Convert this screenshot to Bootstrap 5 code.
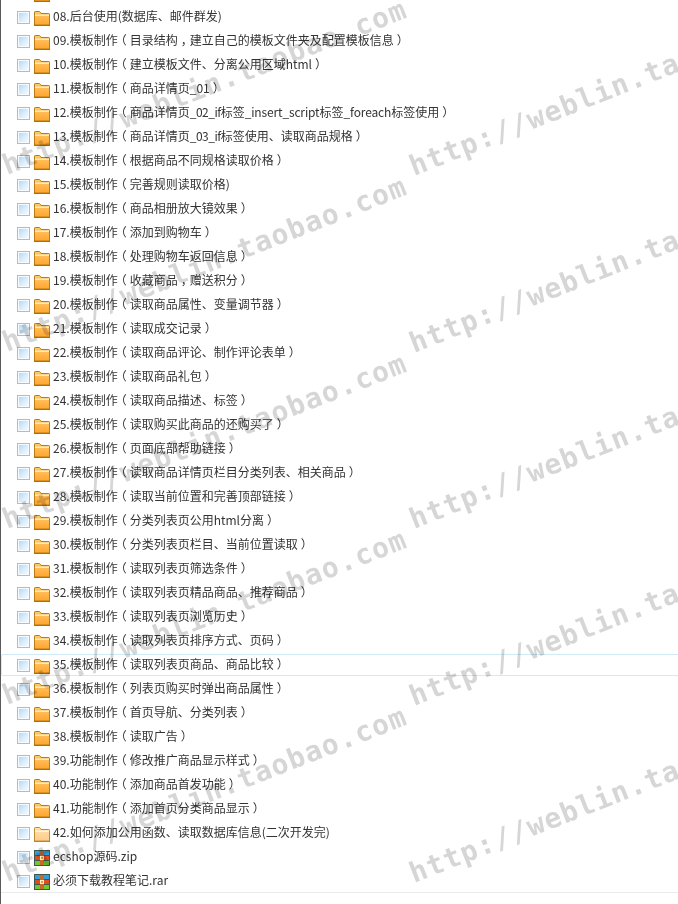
<!DOCTYPE html>
<html lang="zh">
<head>
<meta charset="utf-8">
<title>ecshop</title>
<link href="https://cdn.jsdelivr.net/npm/bootstrap@5.3.0/dist/css/bootstrap.min.css" rel="stylesheet">
<style>
html,body{height:904px;overflow:hidden;background:#fff}
.sheet{position:relative;height:904px;overflow:hidden;border-left:1px solid #5a5a5a;font:12px/22px "Noto Sans CJK SC","Noto Sans",sans-serif;color:#333}
.filelist{margin:-18px 0 0;padding:0;list-style:none;border-bottom:1px solid #e9eaec}
.filerow{height:22px;margin-bottom:2px;padding-left:15px;border:1px solid transparent;border-width:1px 0 1px 1px;white-space:nowrap}
.filerow:last-child{margin-bottom:0}
.filerow>span:last-child{padding-bottom:2px}
.filerow.hot{border-color:#d0eafa;border-radius:2px 0 0 2px}
.tick{width:13px;height:13px;margin-right:4px;flex:none;border:1px solid #8cc4fb;box-shadow:inset 0 0 0 1px #f6fbff;background:linear-gradient(135deg,#b2d9f8 10%,#dceefc 55%,#f6fbff)}
.ficon{width:16px;height:15px;margin:2px 3px 0 0;flex:none;display:block}
.ficon.tall{height:16px;margin-top:1px}
.po,.pc{font-style:normal}
.po{margin-left:-3px;margin-right:3px}
.pc{margin-left:3px;margin-right:-3px}
.snug{letter-spacing:-.5px}
.snugger{letter-spacing:-.15px}
.marks{position:absolute;left:-1px;top:0;width:678px;height:904px;pointer-events:none;mix-blend-mode:multiply}
.marks text{font:bold 28px "DejaVu Sans Mono",monospace;letter-spacing:1.14px;fill:#d6d6d6}
</style>
</head>
<body>
<svg width="0" height="0" class="d-block position-absolute">
<defs>
<linearGradient id="fb" x1="0" y1="0" x2="0" y2="1"><stop offset="0" stop-color="#ffcb6c"/><stop offset="1" stop-color="#ffa32c"/></linearGradient>
<linearGradient id="fp" x1="0" y1="0" x2="0" y2="1"><stop offset="0" stop-color="#ffe3ae"/><stop offset="1" stop-color="#ffc98a"/></linearGradient>
<symbol id="folder" viewBox="0 0 16 15">
<path d="M.5 14.5V1.2q0-.7.7-.7h4q.6 0 1 .6L7 2.5h7.8q.7 0 .7.7v11.3z" fill="url(#fb)" stroke="#bb7d14"/>
<path d="M1 3.5h14V5H1z" fill="#ffe9bd"/>
<path d="M0 13.6h16V15H0z" fill="#b06f00"/>
</symbol>
<symbol id="folderpale" viewBox="0 0 16 15">
<path d="M.5 14.5V1.2q0-.7.7-.7h4q.6 0 1 .6L7 2.5h7.8q.7 0 .7.7v11.3z" fill="url(#fp)" stroke="#c08a30"/>
<path d="M1 3.5h14V5H1z" fill="#fff3da"/>
<path d="M0 13.6h16V15H0z" fill="#bd8420"/>
</symbol>
<symbol id="archive" viewBox="0 0 16 16">
<path d="M0 0h16v16H0z" fill="#3a5a50"/>
<path d="M1 1h14v4H1z" fill="#2f9fe0"/>
<path d="M1 6h14v4H1z" fill="#e6491c"/>
<path d="M1 11h14v4H1z" fill="#72c92d"/>
<path d="M6 1h4v14H6z" fill="#c8692a"/>
<path d="M6 6h4v4H6z" fill="#fff2c8"/>
<path d="M7 7h2v2H7z" fill="#e7a020"/>
</symbol>
</defs>
</svg>
<div class="sheet">
<ul class="filelist">
<li class="filerow d-flex align-items-center"><span class="tick"></span><svg class="ficon"><use href="#folder"/></svg></li>
<li class="filerow d-flex align-items-center"><span class="tick"></span><svg class="ficon"><use href="#folder"/></svg><span>08.后台使用(数据库、邮件群发)</span></li>
<li class="filerow d-flex align-items-center"><span class="tick"></span><svg class="ficon"><use href="#folder"/></svg><span>09.模板制作<i class="po">（</i>目录结构<i class="pc">，</i>建立自己的模板文件夹及配置模板信息<i class="pc">）</i></span></li>
<li class="filerow d-flex align-items-center"><span class="tick"></span><svg class="ficon"><use href="#folder"/></svg><span>10.模板制作<i class="po">（</i>建立模板文件、分离公用区域html<i class="pc">）</i></span></li>
<li class="filerow d-flex align-items-center"><span class="tick"></span><svg class="ficon"><use href="#folder"/></svg><span>11.模板制作<i class="po">（</i>商品详情页_01<i class="pc">）</i></span></li>
<li class="filerow d-flex align-items-center"><span class="tick"></span><svg class="ficon"><use href="#folder"/></svg><span>12.模板制作<i class="po">（</i>商品详情页<span class="snug">_02_if</span>标签<span class="snugger">_insert_script</span>标签<span class="snugger">_foreach</span>标签使用<i class="pc">）</i></span></li>
<li class="filerow d-flex align-items-center"><span class="tick"></span><svg class="ficon"><use href="#folder"/></svg><span>13.模板制作<i class="po">（</i>商品详情页<span class="snug">_03_if</span>标签使用、读取商品规格<i class="pc">）</i></span></li>
<li class="filerow d-flex align-items-center"><span class="tick"></span><svg class="ficon"><use href="#folder"/></svg><span>14.模板制作<i class="po">（</i>根据商品不同规格读取价格<i class="pc">）</i></span></li>
<li class="filerow d-flex align-items-center"><span class="tick"></span><svg class="ficon"><use href="#folder"/></svg><span>15.模板制作<i class="po">（</i>完善规则读取价格)</span></li>
<li class="filerow d-flex align-items-center"><span class="tick"></span><svg class="ficon"><use href="#folder"/></svg><span>16.模板制作<i class="po">（</i>商品相册放大镜效果<i class="pc">）</i></span></li>
<li class="filerow d-flex align-items-center"><span class="tick"></span><svg class="ficon"><use href="#folder"/></svg><span>17.模板制作<i class="po">（</i>添加到购物车<i class="pc">）</i></span></li>
<li class="filerow d-flex align-items-center"><span class="tick"></span><svg class="ficon"><use href="#folder"/></svg><span>18.模板制作<i class="po">（</i>处理购物车返回信息<i class="pc">）</i></span></li>
<li class="filerow d-flex align-items-center"><span class="tick"></span><svg class="ficon"><use href="#folder"/></svg><span>19.模板制作<i class="po">（</i>收藏商品<i class="pc">，</i>赠送积分<i class="pc">）</i></span></li>
<li class="filerow d-flex align-items-center"><span class="tick"></span><svg class="ficon"><use href="#folder"/></svg><span>20.模板制作<i class="po">（</i>读取商品属性、变量调节器<i class="pc">）</i></span></li>
<li class="filerow d-flex align-items-center"><span class="tick"></span><svg class="ficon"><use href="#folder"/></svg><span>21.模板制作<i class="po">（</i>读取成交记录<i class="pc">）</i></span></li>
<li class="filerow d-flex align-items-center"><span class="tick"></span><svg class="ficon"><use href="#folder"/></svg><span>22.模板制作<i class="po">（</i>读取商品评论、制作评论表单<i class="pc">）</i></span></li>
<li class="filerow d-flex align-items-center"><span class="tick"></span><svg class="ficon"><use href="#folder"/></svg><span>23.模板制作<i class="po">（</i>读取商品礼包<i class="pc">）</i></span></li>
<li class="filerow d-flex align-items-center"><span class="tick"></span><svg class="ficon"><use href="#folder"/></svg><span>24.模板制作<i class="po">（</i>读取商品描述、标签<i class="pc">）</i></span></li>
<li class="filerow d-flex align-items-center"><span class="tick"></span><svg class="ficon"><use href="#folder"/></svg><span>25.模板制作<i class="po">（</i>读取购买此商品的还购买了<i class="pc">）</i></span></li>
<li class="filerow d-flex align-items-center"><span class="tick"></span><svg class="ficon"><use href="#folder"/></svg><span>26.模板制作<i class="po">（</i>页面底部帮助链接<i class="pc">）</i></span></li>
<li class="filerow d-flex align-items-center"><span class="tick"></span><svg class="ficon"><use href="#folder"/></svg><span>27.模板制作<i class="po">（</i>读取商品详情页栏目分类列表、相关商品<i class="pc">）</i></span></li>
<li class="filerow d-flex align-items-center"><span class="tick"></span><svg class="ficon"><use href="#folder"/></svg><span>28.模板制作<i class="po">（</i>读取当前位置和完善顶部链接<i class="pc">）</i></span></li>
<li class="filerow d-flex align-items-center"><span class="tick"></span><svg class="ficon"><use href="#folder"/></svg><span>29.模板制作<i class="po">（</i>分类列表页公用html分离<i class="pc">）</i></span></li>
<li class="filerow d-flex align-items-center"><span class="tick"></span><svg class="ficon"><use href="#folder"/></svg><span>30.模板制作<i class="po">（</i>分类列表页栏目、当前位置读取<i class="pc">）</i></span></li>
<li class="filerow d-flex align-items-center"><span class="tick"></span><svg class="ficon"><use href="#folder"/></svg><span>31.模板制作<i class="po">（</i>读取列表页筛选条件<i class="pc">）</i></span></li>
<li class="filerow d-flex align-items-center"><span class="tick"></span><svg class="ficon"><use href="#folder"/></svg><span>32.模板制作<i class="po">（</i>读取列表页精品商品、推荐商品<i class="pc">）</i></span></li>
<li class="filerow d-flex align-items-center"><span class="tick"></span><svg class="ficon"><use href="#folder"/></svg><span>33.模板制作<i class="po">（</i>读取列表页浏览历史<i class="pc">）</i></span></li>
<li class="filerow d-flex align-items-center"><span class="tick"></span><svg class="ficon"><use href="#folder"/></svg><span>34.模板制作<i class="po">（</i>读取列表页排序方式、页码<i class="pc">）</i></span></li>
<li class="filerow hot d-flex align-items-center"><span class="tick"></span><svg class="ficon"><use href="#folder"/></svg><span>35.模板制作<i class="po">（</i>读取列表页商品、商品比较<i class="pc">）</i></span></li>
<li class="filerow d-flex align-items-center"><span class="tick"></span><svg class="ficon"><use href="#folder"/></svg><span>36.模板制作<i class="po">（</i>列表页购买时弹出商品属性<i class="pc">）</i></span></li>
<li class="filerow d-flex align-items-center"><span class="tick"></span><svg class="ficon"><use href="#folder"/></svg><span>37.模板制作<i class="po">（</i>首页导航、分类列表<i class="pc">）</i></span></li>
<li class="filerow d-flex align-items-center"><span class="tick"></span><svg class="ficon"><use href="#folder"/></svg><span>38.模板制作<i class="po">（</i>读取广告<i class="pc">）</i></span></li>
<li class="filerow d-flex align-items-center"><span class="tick"></span><svg class="ficon"><use href="#folder"/></svg><span>39.功能制作<i class="po">（</i>修改推广商品显示样式<i class="pc">）</i></span></li>
<li class="filerow d-flex align-items-center"><span class="tick"></span><svg class="ficon"><use href="#folder"/></svg><span>40.功能制作<i class="po">（</i>添加商品首发功能<i class="pc">）</i></span></li>
<li class="filerow d-flex align-items-center"><span class="tick"></span><svg class="ficon"><use href="#folder"/></svg><span>41.功能制作<i class="po">（</i>添加首页分类商品显示<i class="pc">）</i></span></li>
<li class="filerow d-flex align-items-center"><span class="tick"></span><svg class="ficon"><use href="#folderpale"/></svg><span>42.如何添加公用函数、读取数据库信息(二次开发完)</span></li>
<li class="filerow d-flex align-items-center"><span class="tick"></span><svg class="ficon tall"><use href="#archive"/></svg><span>ecshop源码.zip</span></li>
<li class="filerow d-flex align-items-center"><span class="tick"></span><svg class="ficon tall"><use href="#archive"/></svg><span>必须下载教程笔记.rar</span></li>
</ul>
<svg class="marks" viewBox="0 0 678 904" aria-hidden="true">
<text transform="translate(7 175) rotate(-21.5)">http://weblin.taobao.com</text>
<text transform="translate(7 352) rotate(-21.5)">http://weblin.taobao.com</text>
<text transform="translate(7 529) rotate(-21.5)">http://weblin.taobao.com</text>
<text transform="translate(7 705) rotate(-21.5)">http://weblin.taobao.com</text>
<text transform="translate(7 882) rotate(-21.5)">http://weblin.taobao.com</text>
<text transform="translate(414 176) rotate(-21.5)">http://weblin.taobao.com</text>
<text transform="translate(414 353) rotate(-21.5)">http://weblin.taobao.com</text>
<text transform="translate(414 529) rotate(-21.5)">http://weblin.taobao.com</text>
<text transform="translate(414 706) rotate(-21.5)">http://weblin.taobao.com</text>
<text transform="translate(414 883) rotate(-21.5)">http://weblin.taobao.com</text>
</svg>
</div>
<script src="https://cdn.jsdelivr.net/npm/bootstrap@5.3.0/dist/js/bootstrap.bundle.min.js"></script>
</body>
</html>
